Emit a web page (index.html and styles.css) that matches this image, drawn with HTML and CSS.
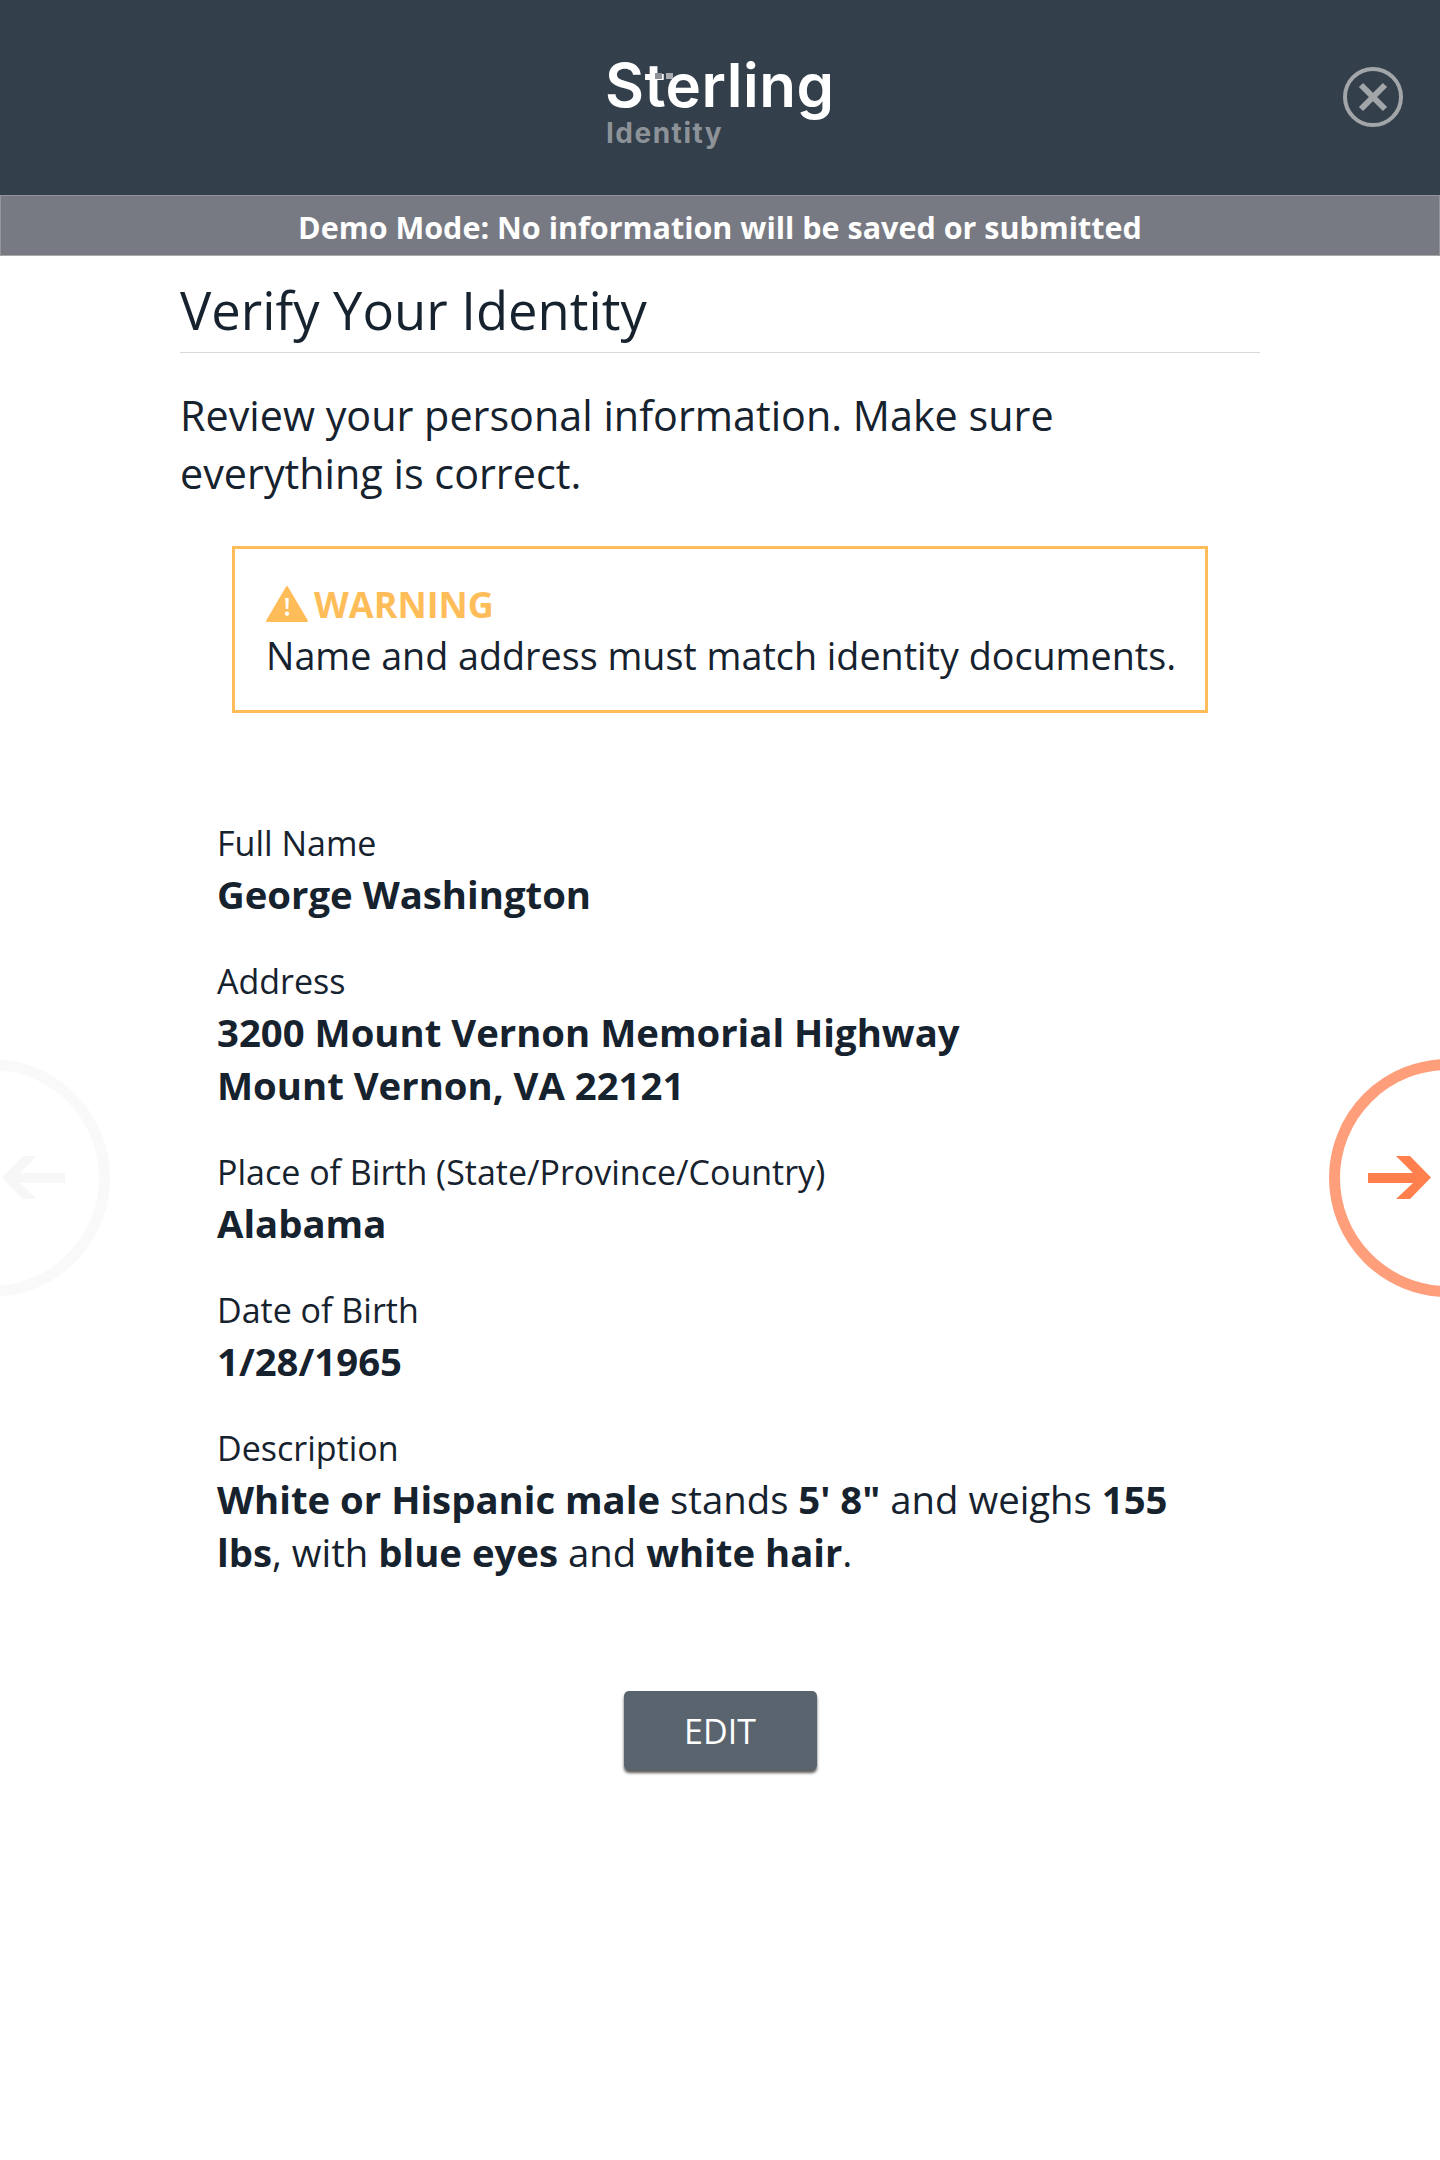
FILE: index.html
```html
<!DOCTYPE html>
<html lang="en">
<head>
    <meta charset="UTF-8">
    <meta name="viewport" content="width=device-width, initial-scale=1.0">
    <title>Verify Your Identity</title>
    <link rel="stylesheet" href="styles.css">
</head>
<body>
<div class="page">
    <header class="top-bar">
        <div class="logo">
            <div class="logo-name">Sterling</div>
            <span class="logo-dot logo-dot-dim"></span>
            <span class="logo-dot logo-dot-light"></span>
            <div class="logo-sub">Identity</div>
        </div>
        <svg class="close-icon" viewBox="0 0 60 60" width="60" height="60">
            <circle cx="30" cy="30" r="28" fill="none" stroke="#a3a6a9" stroke-width="4"/>
            <path d="M18 18 L42 42 M42 18 L18 42" fill="none" stroke="#a3a6a9" stroke-width="6"/>
        </svg>
    </header>
    <div class="demo-banner">Demo Mode: No information will be saved or submitted</div>

    <!-- Side navigation -->
    <div class="nav-circle nav-prev">
        <svg viewBox="0 0 64 44" width="64" height="44"><path d="M64 17 H19 L36 0 H22 L1 21.5 L22 43 H36 L19 27 H64 Z" fill="#f7f7f7"/></svg>
    </div>
    <div class="nav-circle nav-next">
        <svg viewBox="0 0 64 44" width="64" height="44"><path d="M0 17 H45 L28 0 H42 L63 21.5 L42 43 H28 L45 27 H0 Z" fill="#ff7f4d"/></svg>
    </div>

    <main class="content">
        <h1 class="page-title">Verify Your Identity</h1>
        <p class="intro">Review your personal information. Make sure everything is correct.</p>

        <div class="warning-box">
            <div class="warning-title">
                <svg viewBox="0 0 42 36" width="42" height="36"><path d="M21 1 L41 35 H1 Z" fill="#ffbd59" stroke="#ffbd59" stroke-width="2" stroke-linejoin="round"/><path d="M19.2 12 H22.8 L22.2 23 H19.8 Z M21 25.5 A2.2 2.2 0 1 1 20.99 25.5 Z" fill="#fff"/></svg>
                <span>WARNING</span>
            </div>
            <div class="warning-text">Name and address must match identity documents.</div>
        </div>

        <div class="details">
            <div class="field">
                <div class="field-label">Full Name</div>
                <div class="field-value"><strong>George Washington</strong></div>
            </div>
            <div class="field">
                <div class="field-label">Address</div>
                <div class="field-value"><strong>3200 Mount Vernon Memorial Highway<br>Mount Vernon, VA 22121</strong></div>
            </div>
            <div class="field">
                <div class="field-label">Place of Birth (State/Province/Country)</div>
                <div class="field-value"><strong>Alabama</strong></div>
            </div>
            <div class="field">
                <div class="field-label">Date of Birth</div>
                <div class="field-value"><strong>1/28/1965</strong></div>
            </div>
            <div class="field">
                <div class="field-label">Description</div>
                <div class="field-value"><strong>White or Hispanic male</strong> stands <strong>5' 8"</strong> and weighs <strong>155 lbs</strong>, with <strong>blue eyes</strong> and <strong>white hair</strong>.</div>
            </div>
        </div>

        <div class="buttons">
            <button type="button" class="edit-btn">EDIT</button>
        </div>
    </main>
</div>
</body>
</html>
```

FILE: styles.css
```css
body {
    font-family: "Open Sans", "Noto Sans", sans-serif;
    margin: 0;
    padding: 0;
    background-color: #fff;
    color: #16222e;
}

.page {
    position: relative;
    width: 1440px;
    height: 2160px;
    overflow: hidden;
}

.top-bar {
    height: 195px;
    background-color: #333f4a;
    display: flex;
    justify-content: center;
    align-items: center;
    position: relative;
}

.logo {
    width: 230px;
    margin-top: 2px;
    position: relative;
}

.logo-name {
    font-family: Inter, sans-serif;
    font-size: 60px;
    font-weight: 600;
    line-height: 68px;
    letter-spacing: 0.5px;
    color: #fff;
}

.logo-dot {
    position: absolute;
    top: 22px;
    width: 7px;
    height: 6px;
}

.logo-dot-dim {
    left: 50px;
    background-color: #8d9298;
}

.logo-dot-light {
    left: 61px;
    background-color: #a9adb1;
}

.logo-sub {
    font-family: Inter, sans-serif;
    font-size: 28px;
    font-weight: 700;
    line-height: 28px;
    letter-spacing: 1.5px;
    padding-left: 1px;
    color: #8d9298;
}

.close-icon {
    position: absolute;
    top: 67px;
    right: 37px;
}

.demo-banner {
    height: 57px;
    padding-top: 2px;
    line-height: 59px;
    background-color: #777a83;
    border: 1px solid #92959b;
    border-bottom-color: #a8a8a8;
    text-align: center;
    color: #fff;
    font-size: 30.5px;
    font-weight: 700;
}

.nav-circle {
    position: absolute;
    top: 1059px;
    width: 238px;
    height: 238px;
    box-sizing: border-box;
    border-radius: 50%;
    border: 11px solid #f9f9f9;
    display: flex;
    align-items: center;
}

.nav-prev {
    left: -128px;
    justify-content: flex-end;
    padding-right: 34px;
}

.nav-next {
    left: 1329px;
    border-color: #ff9e7a;
    padding-left: 28px;
}

.content {
    width: 1080px;
    margin: 0 auto;
}

.page-title {
    font-size: 52.5px;
    font-weight: 400;
    line-height: 70px;
    margin: 0;
    padding: 19px 0 7px;
    border-bottom: 1px solid #d8d8d8;
}

.intro {
    font-size: 41.3px;
    line-height: 58px;
    margin: 33px 0 0;
}

.warning-box {
    width: 976px;
    box-sizing: border-box;
    margin: 44px auto 0;
    height: 167px;
    padding: 28px 15px 30px 31px;
    border: 3px solid #ffbd59;
}

.warning-title {
    display: flex;
    align-items: center;
    gap: 6px;
    height: 54px;
    font-size: 36px;
    font-weight: 700;
    color: #ffbd59;
}

.warning-text {
    font-size: 37.7px;
    line-height: 50px;
}

.details {
    margin-top: 106px;
    padding: 0 37px;
}

.field {
    margin-bottom: 36px;
}

.field-label {
    font-size: 34px;
    line-height: 49px;
}

.field-value {
    font-size: 38.3px;
    line-height: 53px;
}

.buttons {
    margin-top: 112px;
    text-align: center;
}

.edit-btn {
    width: 193px;
    height: 79px;
    font-family: inherit;
    font-size: 34px;
    color: #fff;
    background-color: #5a646e;
    border: none;
    border-radius: 5px;
    box-shadow: 0 3px 3px rgba(0,0,0,0.65);
}
```
